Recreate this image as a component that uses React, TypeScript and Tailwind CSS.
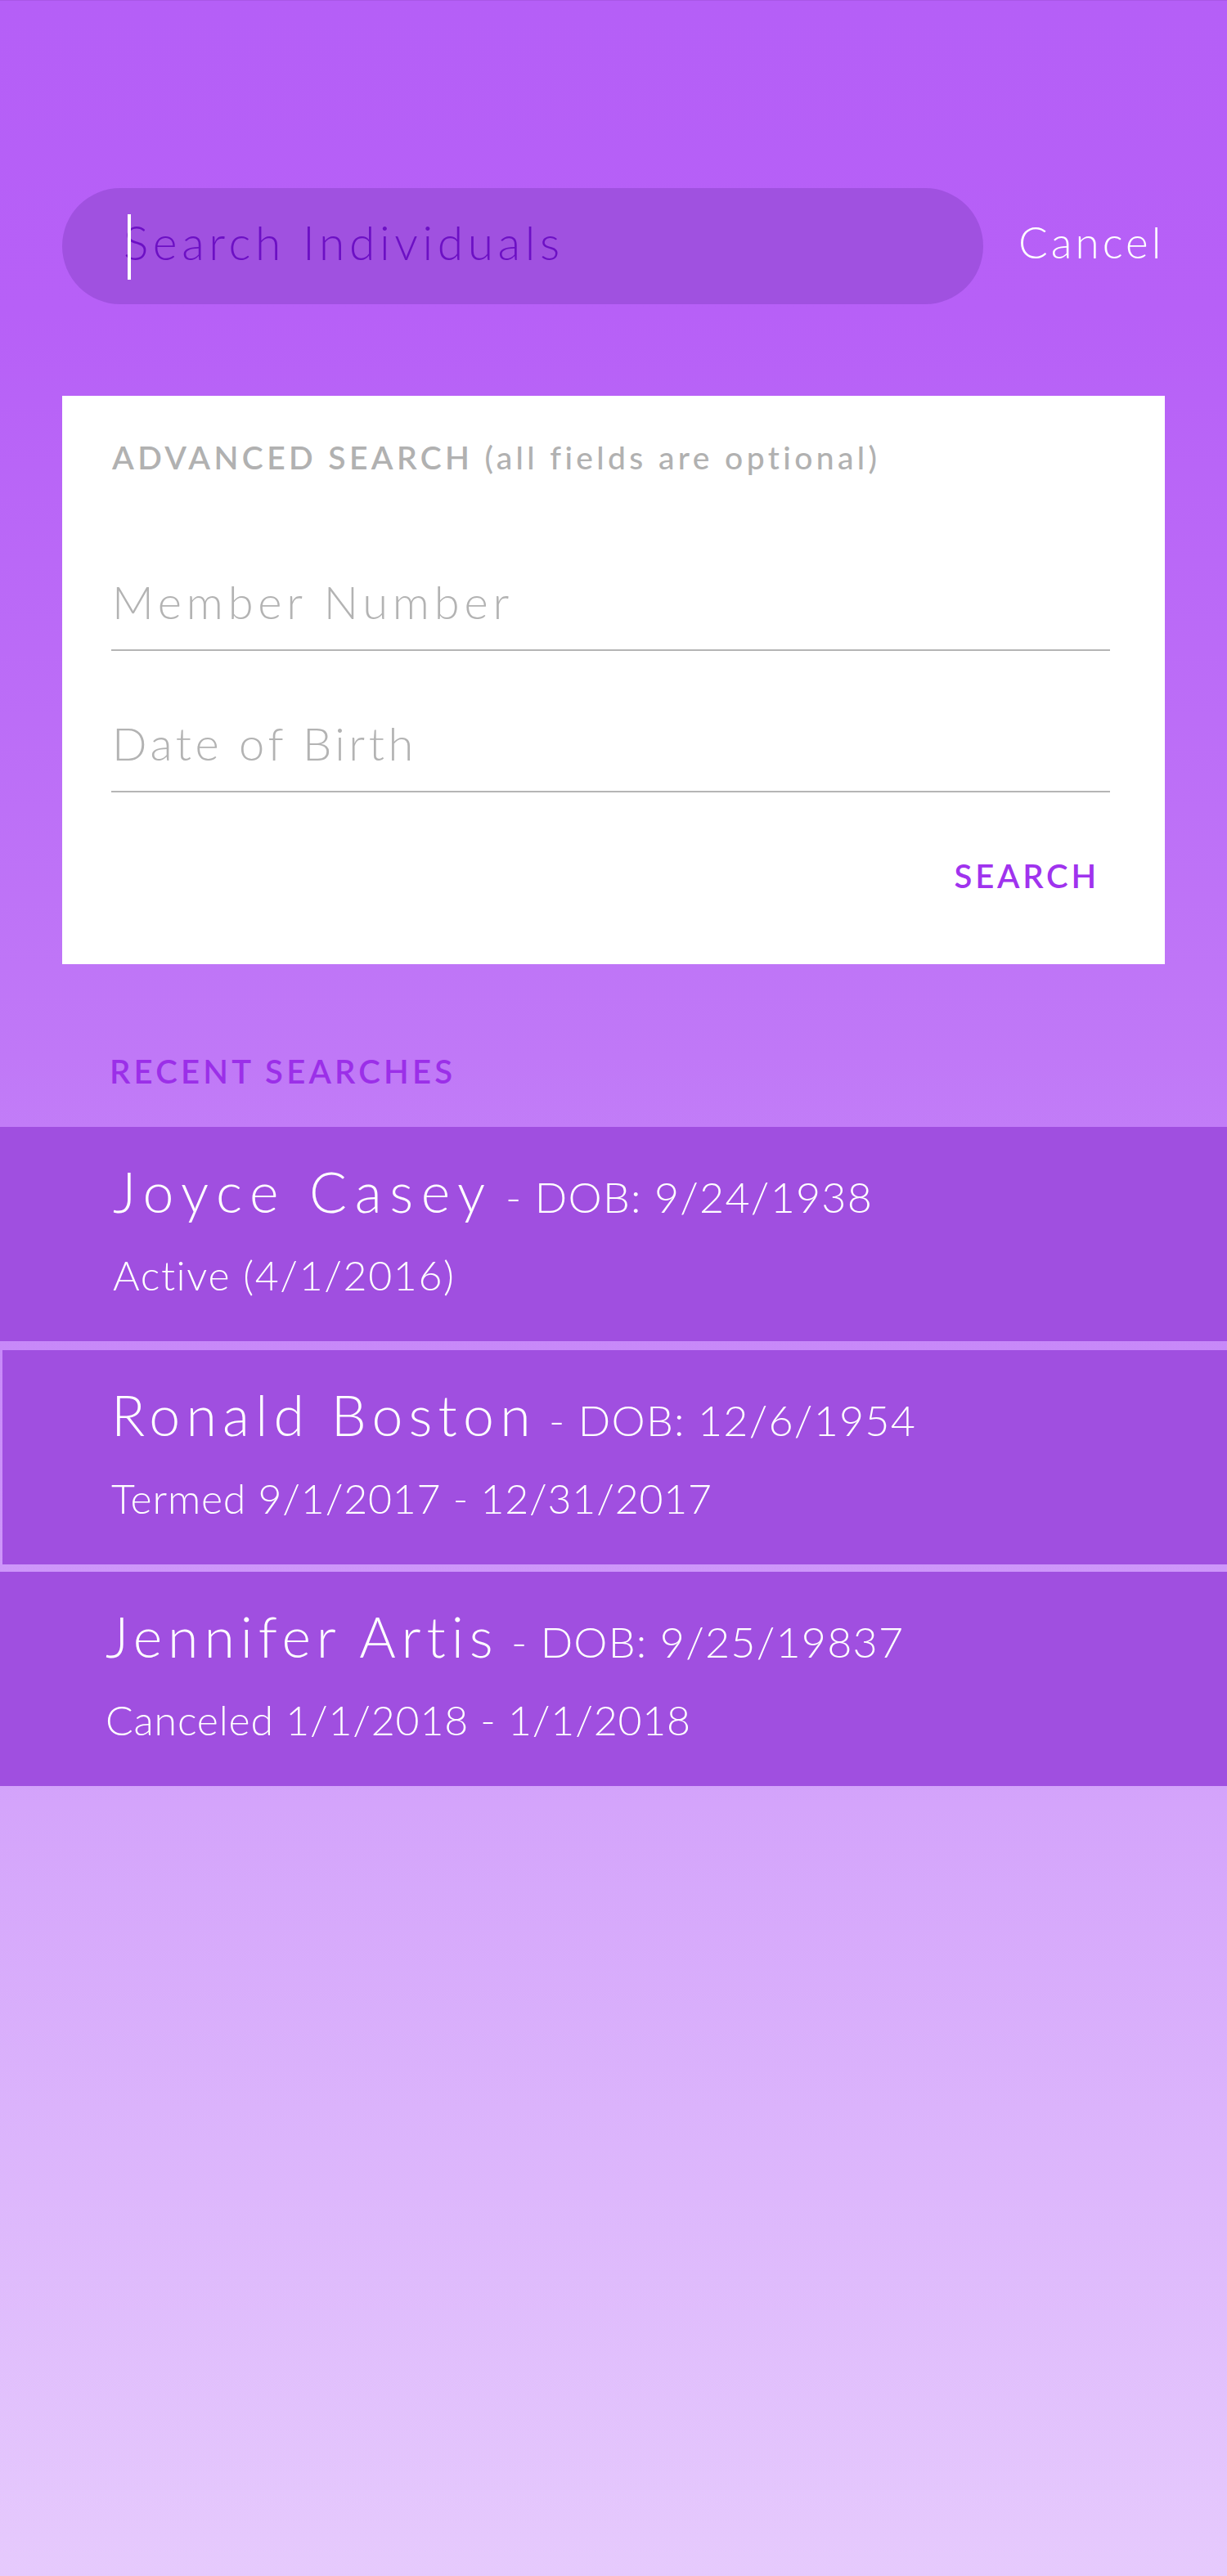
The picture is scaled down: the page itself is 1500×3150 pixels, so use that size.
import React from "react";

const font = { fontFamily: "Lato, 'Open Sans', sans-serif" };

type Row = { name: string; dob: string; status: string; extra: string; track: string; statusTrack: string };

const rows: Row[] = [
  { name: "Joyce Casey", dob: "9/24/1938", status: "Active (4/1/2016)", extra: "pl-[138px]", track: "tracking-[9.6px]", statusTrack: "tracking-[1.6px]" },
  { name: "Ronald Boston", dob: "12/6/1954", status: "Termed 9/1/2017 - 12/31/2017", extra: "pl-[133px] ml-[3px]", track: "tracking-[7.2px]", statusTrack: "tracking-[0.8px]" },
  { name: "Jennifer Artis", dob: "9/25/19837", status: "Canceled 1/1/2018 - 1/1/2018", extra: "pl-[129px]", track: "tracking-[6.9px]", statusTrack: "tracking-[0.8px]" },
];

export default function App() {
  return (
    <div
      className="w-[1500px] h-[3150px] overflow-hidden border-t border-[#a957e6] bg-[linear-gradient(180deg,#b55ff7_0%,#b760f7_12%,#c078f7_41%,#d4a4fb_70%,#e6cafd_100%)]"
      style={font}
    >
      <div className="flex items-center pt-[229px]">
        <div className="relative ml-[76px] flex h-[142px] w-[1126px] items-center rounded-full bg-[#a051e0] pb-[10px] pl-[75px]">
          <span className="absolute left-[80px] top-[32px] h-[80px] w-[4px] bg-white" />
          <span className="text-[57px] font-light leading-none tracking-[5.6px] text-[#6c10c4]">
            Search Individuals
          </span>
        </div>
        <span className="mb-[12px] ml-[43px] text-[53px] font-light leading-none tracking-[4px] text-white">
          Cancel
        </span>
      </div>

      <div className="mx-[76px] mt-[112px] flex h-[695px] flex-col bg-white pl-[60px] pr-[67px] pt-[56px]">
        <div className="pl-[1px] text-[39px] font-semibold leading-none tracking-[4.4px] text-[#b1b1b1]">
          ADVANCED SEARCH <span className="font-medium">(all fields are optional)</span>
        </div>
        <div className="mt-[129px] border-b-2 border-[#b5b5b5] pb-[30px] pl-[1px] text-[56px] font-light leading-none tracking-[5.8px] text-[#b3b3b3]">
          Member Number
        </div>
        <div className="mt-[85px] border-b-2 border-[#b5b5b5] pb-[30px] pl-[1px] text-[56px] font-light leading-none tracking-[4.6px] text-[#b3b3b3]">
          Date of Birth
        </div>
        <div className="mt-[82px] flex justify-end pr-[13px]">
          <span className="text-[40px] font-semibold leading-none tracking-[3.8px] text-[#a033ee]">SEARCH</span>
        </div>
      </div>

      <div className="mt-[111px] pl-[134px] text-[40px] font-semibold leading-none tracking-[4.2px] text-[#9b2fe8]">
        RECENT SEARCHES
      </div>

      <div className="mt-[48px] flex flex-col">
        {rows.map((r, i) => (
          <div
            key={r.name}
            className={`flex h-[262px] flex-col bg-[#a04fe0] pt-[45px] ${r.extra} ${i === 1 ? "mt-[11px]" : ""} ${i === 2 ? "mt-[9px]" : ""}`}
          >
            <div className={`text-[68px] font-light leading-none text-white ${r.track}`}>
              {r.name}
              <span className="text-[52px] tracking-[1.2px]"> - DOB: {r.dob}</span>
            </div>
            <div className={`mt-[43px] text-[50px] font-light leading-none text-white ${r.statusTrack}`}>
              {r.status}
            </div>
          </div>
        ))}
      </div>
    </div>
  );
}
